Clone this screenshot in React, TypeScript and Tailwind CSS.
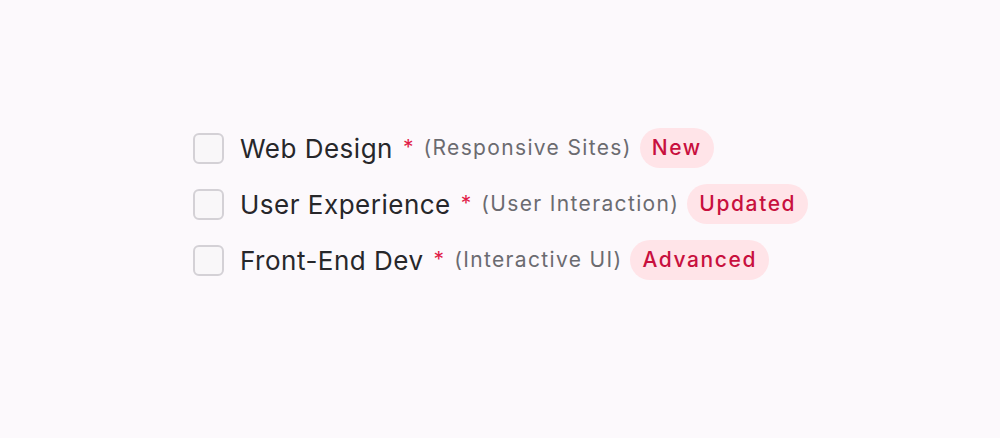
import React from "react";

const items = [
    { label: "Web Design", hint: "(Responsive Sites)", badge: "New" },
    { label: "User Experience", hint: "(User Interaction)", badge: "Updated" },
    { label: "Front-End Dev", hint: "(Interactive UI)", badge: "Advanced" },
];

export default function App() {
    return (
        <div
            className="w-full h-[438px] bg-[#fcf9fc] flex flex-col pl-[193px] pt-[128px] gap-4"
            style={{ fontFamily: "Inter, 'Noto Sans', sans-serif" }}
        >
            {items.map((item) => (
                <label key={item.label} className="flex items-center h-10 cursor-pointer">
                    <span className="w-[31px] h-[31px] rounded-md border-2 border-[#d4d1d6] bg-[#f9f7f9] shrink-0" />
                    <span className="ml-4 text-[26px] tracking-[0.5px] text-[#27272a]">{item.label}</span>
                    <span className="ml-2.5 text-[21px] text-[#e11d48]">*</span>
                    <span className="ml-2.5 text-[21px] tracking-[1.35px] text-[#6b6b70]">{item.hint}</span>
                    <span className="ml-2 h-10 pl-3 pr-3 rounded-full bg-[#ffe4e8] text-[#c8103e] text-[21px] tracking-[1.6px] font-medium flex items-center">
                        {item.badge}
                    </span>
                </label>
            ))}
        </div>
    );
}
